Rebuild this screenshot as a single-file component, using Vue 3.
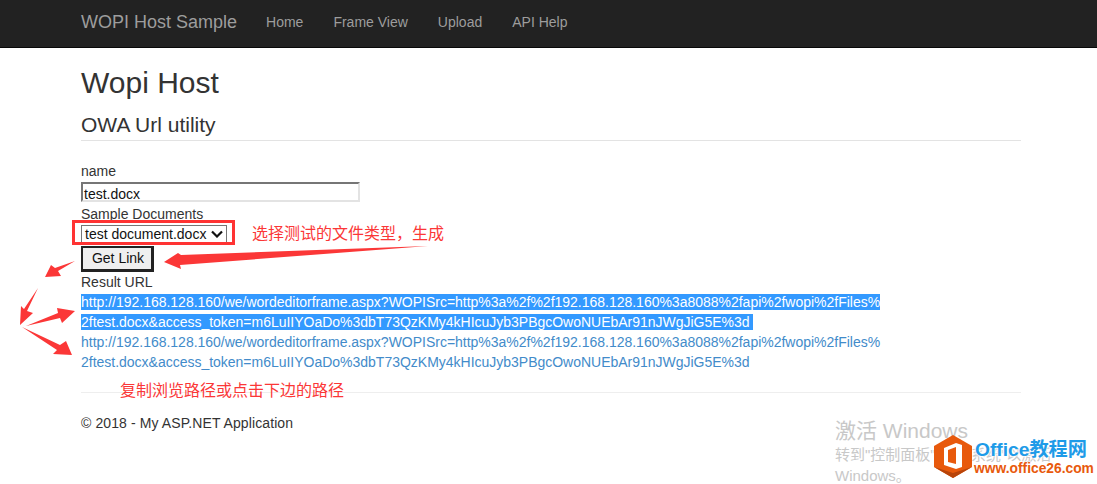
<script setup>
const nav = ['Home', 'Frame View', 'Upload', 'API Help']
const url1 = 'http://192.168.128.160/we/wordeditorframe.aspx?WOPISrc=http%3a%2f%2f192.168.128.160%3a8088%2fapi%2fwopi%2fFiles%'
const url2 = '2ftest.docx&access_token=m6LuIIYOaDo%3dbT73QzKMy4kHIcuJyb3PBgcOwoNUEbAr91nJWgJiG5E%3d'
const arrows = [
  '428,246 181,255 178,253 164,262 181,269 180,265',
  '75,261 58,271 61,276 45,277 51,265 55,268',
  '38,288 27,311 33,313 20,325 21,306 24,309',
  '26,326 58,313 57,308 75,311 62,323 60,318',
  '22,327 60,345 66,341 72,355 53,354 57,350'
]
</script>

<template>
  <div class="page">
    <header class="navbar">
      <div class="brand">WOPI Host Sample</div>
      <nav class="links">
        <a v-for="item in nav" :key="item" class="nav-link">{{ item }}</a>
      </nav>
    </header>

    <main class="content">
      <h1>Wopi Host</h1>
      <h2>OWA Url utility</h2>
      <hr class="rule-head" />
      <div class="label">name</div>
      <div class="input">test.docx</div>
      <div class="label">Sample Documents</div>
      <div class="select">
        <span>test document.docx</span>
        <svg width="12" height="8" viewBox="0 0 12 8"><path d="M1 1.5 6 6.5 11 1.5" fill="none" stroke="#111" stroke-width="2.2" /></svg>
      </div>
      <button class="btn">Get Link</button>
      <div class="label">Result URL</div>
      <div class="url selected"><span>{{ url1 }}</span><br /><span class="tail">{{ url2 }}</span></div>
      <div class="url">{{ url1 }}<br />{{ url2 }}</div>
      <hr class="rule-foot" />
      <footer class="foot">© 2018 - My ASP.NET Application</footer>
    </main>

    <div class="red-box"></div>
    <div class="note note-a">选择测试的文件类型，生成</div>
    <div class="note note-b">复制浏览路径或点击下边的路径</div>
    <svg class="arrows" width="1097" height="484" viewBox="0 0 1097 484">
      <polygon v-for="p in arrows" :key="p" :points="p" fill="#fb3737" />
    </svg>

    <div class="activate">
      <div class="a1">激活 Windows</div>
      <div class="a2">转到"控制面板"中的"系统"以激活</div>
      <div class="a3">Windows。</div>
    </div>
    <div class="mark">
      <svg class="hex" width="38" height="43" viewBox="0 0 38 43">
        <polygon points="19,0 38,11 38,32 19,43 0,32 0,11" fill="#e8590c" />
        <polygon points="38,32 19,43 0,32 19,38" fill="#b8440a" />
        <path d="M10 13 22 8 28 10V32L22 34 10 30ZM14 15V27L22 29V12Z" fill="#fff" />
      </svg>
      <div class="mark-text">
        <div class="m1">Office教程网</div>
        <div class="m2">www.office26.com</div>
      </div>
    </div>
  </div>
</template>

<style>
html, body { margin: 0; background: #fff; }
</style>

<style scoped>
.page {
  position: relative;
  width: 1097px;
  height: 484px;
  overflow: hidden;
  font-family: "Liberation Sans", "Noto Sans CJK SC", sans-serif;
  font-size: 14px;
  line-height: 20px;
  color: #333;
}
.navbar {
  display: flex;
  align-items: center;
  box-sizing: border-box;
  height: 48px;
  padding: 0 0 4px 81px;
  background: #222;
  border-bottom: 1px solid #080808;
}
.brand { font-size: 18px; color: #9d9d9d; margin-right: 14px; }
.links { display: flex; }
.nav-link { padding: 0 15px; color: #9d9d9d; }
.content { padding: 0 76px 0 81px; }
h1 { font-size: 30px; line-height: 33px; font-weight: 400; margin: 18px 0 0; }
h2 { font-size: 21px; line-height: 23px; font-weight: 400; margin: 14px 0 0; }
.rule-head { margin: 4px 0 20px; border: 0; border-top: 1px solid #e3e3e3; }
.label { height: 20px; }
.input {
  box-sizing: border-box;
  width: 279px;
  height: 20px;
  margin: 1px 0 2px;
  padding: 1px 0 0 1px;
  border: 2px solid;
  border-color: #767676 #e3e3e3 #e3e3e3 #767676;
  font-size: 14px;
  line-height: 18px;
  color: #111;
}
.select {
  display: flex;
  align-items: center;
  justify-content: space-between;
  box-sizing: border-box;
  width: 146px;
  height: 18px;
  margin: 1px 0 3px;
  padding: 0 3px;
  border: 1px solid #767676;
  font-size: 14px;
  color: #111;
}
.btn {
  display: block;
  box-sizing: border-box;
  width: 73px;
  height: 26px;
  margin: 0;
  padding: 0 0 1px 2px;
  border: 2px solid #222;
  border-bottom-width: 3px;
  border-right-width: 3px;
  background: #efefef;
  font: 14px/20px "Liberation Sans", sans-serif;
  color: #111;
}
.url { color: #428bca; white-space: nowrap; letter-spacing: -0.012px; }
.selected span { background: #3399ff; color: #fff; }
.selected .tail { padding-right: 3px; }
.rule-foot { margin: 20px 0; border: 0; border-top: 1px solid #eee; }
.foot { letter-spacing: 0.1px; }
.red-box {
  position: absolute;
  left: 72px;
  top: 220px;
  width: 157px;
  height: 19px;
  border: 3px solid #f33;
}
.note {
  position: absolute;
  color: #fb3737;
  font-size: 16px;
  line-height: 20px;
  white-space: nowrap;
  font-family: "Noto Sans CJK SC", sans-serif;
}
.note-a { left: 252px; top: 222px; }
.note-b { left: 120px; top: 379px; }
.arrows { position: absolute; left: 0; top: 0; pointer-events: none; }
.activate {
  position: absolute;
  left: 835px;
  top: 418px;
  color: #c8c8c8;
  font-family: "Liberation Sans", "Noto Sans CJK SC", sans-serif;
  white-space: nowrap;
}
.a1 { font-size: 21px; line-height: 26px; }
.a2 { font-size: 15px; line-height: 21px; }
.a3 { font-size: 15px; line-height: 21px; }
.mark {
  position: absolute;
  left: 934px;
  top: 435px;
  display: flex;
  gap: 3px;
}
.mark-text {
  padding-top: 4px;
  font-weight: 700;
  white-space: nowrap;
  font-family: "Liberation Sans", "Noto Sans CJK SC", sans-serif;
  text-shadow: 0 0 2px #fff, 0 0 2px #fff, 0 0 3px #fff;
}
.m1 { font-size: 19.2px; line-height: 22px; color: #1e9be8; }
.m2 { font-size: 13.8px; line-height: 16px; margin-left: -1px; color: #e8590c; }
</style>
